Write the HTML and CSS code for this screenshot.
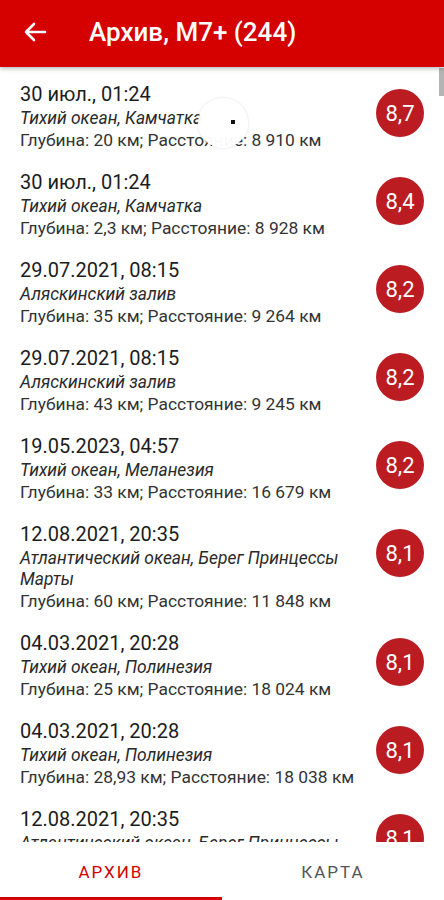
FILE: index.html
```html
<!DOCTYPE html>
<html lang="ru">
<head>
    <meta charset="UTF-8">
    <meta name="viewport" content="width=device-width, initial-scale=1.0">
    <title>Архив, M7+</title>
    <link rel="stylesheet" href="styles.css">
</head>
<body>

<div class="app">
    <header class="appbar">
        <svg class="back" width="24" height="20" viewBox="0 0 24 20">
            <path d="M22 10H3M11 2L3 10l8 8" fill="none" stroke="#fff" stroke-width="2.6" stroke-linecap="round" stroke-linejoin="round"/>
        </svg>
        <h1 class="title">Архив, M7+ (244)</h1>
    </header>

    <main class="list">
        <div class="scrollbar"></div>

        <div class="quake">
            <div class="info">
                <div class="date">30 июл., 01:24</div>
                <div class="place">Тихий океан, Камчатка</div>
                <div class="meta">Глубина: 20 км; Расстояние: 8 910 км</div>
            </div>
            <div class="mag">8,7</div>
        </div>

        <div class="quake">
            <div class="info">
                <div class="date">30 июл., 01:24</div>
                <div class="place">Тихий океан, Камчатка</div>
                <div class="meta">Глубина: 2,3 км; Расстояние: 8 928 км</div>
            </div>
            <div class="mag">8,4</div>
        </div>

        <div class="quake">
            <div class="info">
                <div class="date">29.07.2021, 08:15</div>
                <div class="place">Аляскинский залив</div>
                <div class="meta">Глубина: 35 км; Расстояние: 9 264 км</div>
            </div>
            <div class="mag">8,2</div>
        </div>

        <div class="quake">
            <div class="info">
                <div class="date">29.07.2021, 08:15</div>
                <div class="place">Аляскинский залив</div>
                <div class="meta">Глубина: 43 км; Расстояние: 9 245 км</div>
            </div>
            <div class="mag">8,2</div>
        </div>

        <div class="quake">
            <div class="info">
                <div class="date">19.05.2023, 04:57</div>
                <div class="place">Тихий океан, Меланезия</div>
                <div class="meta">Глубина: 33 км; Расстояние: 16 679 км</div>
            </div>
            <div class="mag">8,2</div>
        </div>

        <div class="quake">
            <div class="info">
                <div class="date">12.08.2021, 20:35</div>
                <div class="place">Атлантический океан, Берег Принцессы Марты</div>
                <div class="meta">Глубина: 60 км; Расстояние: 11 848 км</div>
            </div>
            <div class="mag">8,1</div>
        </div>

        <div class="quake">
            <div class="info">
                <div class="date">04.03.2021, 20:28</div>
                <div class="place">Тихий океан, Полинезия</div>
                <div class="meta">Глубина: 25 км; Расстояние: 18 024 км</div>
            </div>
            <div class="mag">8,1</div>
        </div>

        <div class="quake">
            <div class="info">
                <div class="date">04.03.2021, 20:28</div>
                <div class="place">Тихий океан, Полинезия</div>
                <div class="meta">Глубина: 28,93 км; Расстояние: 18 038 км</div>
            </div>
            <div class="mag">8,1</div>
        </div>

        <div class="quake">
            <div class="info">
                <div class="date">12.08.2021, 20:35</div>
                <div class="place">Атлантический океан, Берег Принцессы Марты</div>
                <div class="meta">Глубина: 60 км; Расстояние: 11 848 км</div>
            </div>
            <div class="mag">8,1</div>
        </div>

        <!-- touch indicator left on the screenshot -->
        <div class="touch"></div>
        <div class="touch-dot"></div>
    </main>

    <nav class="tabs">
        <div class="tab active">Архив</div>
        <div class="tab">Карта</div>
    </nav>
</div>

</body>
</html>
```

FILE: styles.css
```css
body {
    margin: 0;
    background-color: #fff;
    font-family: Roboto, 'Noto Sans', sans-serif;
    -webkit-font-smoothing: antialiased;
}
.app {
    display: flex;
    flex-direction: column;
    width: 444px;
    height: 900px;
    overflow: hidden;
}
.appbar {
    position: relative;
    z-index: 2;
    display: flex;
    align-items: center;
    height: 67px;
    flex-shrink: 0;
    padding: 0 0 0 23px;
    background-color: #d50000;
    box-shadow: 0 2px 4px rgba(0, 0, 0, 0.25);
}
.back {
    display: block;
    margin-top: -4px;
}
.title {
    margin: -4px 0 0 42px;
    font-size: 26px;
    font-weight: 500;
    color: #fff;
}
.list {
    position: relative;
    flex: 1;
    overflow: hidden;
    padding-top: 5px;
}
.scrollbar {
    position: absolute;
    top: 1px;
    right: 0;
    width: 5px;
    height: 28px;
    background-color: #b4b4b4;
}
.quake {
    display: flex;
    align-items: flex-start;
    padding: 8px 20px 9px 20px;
}
.info {
    flex: 1;
}
.date {
    font-size: 20px;
    line-height: 28px;
    color: #1c1c1c;
}
.place {
    font-size: 17.4px;
    line-height: 21px;
    font-style: italic;
    color: #2a2a2a;
}
.meta {
    font-size: 17.4px;
    line-height: 22px;
    color: #333;
}
.mag {
    display: flex;
    align-items: center;
    justify-content: center;
    width: 48px;
    height: 48px;
    margin: 9px 0 0 6px;
    border-radius: 50%;
    background-color: #bb1c22;
    color: #fff;
    font-size: 22px;
}
.touch {
    position: absolute;
    left: 198px;
    top: 31px;
    width: 50px;
    height: 50px;
    border-radius: 50%;
    background-color: rgba(255, 255, 255, 0.97);
    box-shadow: 0 0 3px rgba(0, 0, 0, 0.15);
}
.touch-dot {
    position: absolute;
    left: 231px;
    top: 53px;
    width: 4px;
    height: 4px;
    background-color: #111;
}
.tabs {
    display: flex;
    height: 58px;
    flex-shrink: 0;
    background-color: #fff;
}
.tab {
    flex: 1;
    display: flex;
    align-items: center;
    justify-content: center;
    padding: 5px 0 3px 0;
    font-size: 17px;
    letter-spacing: 2px;
    text-transform: uppercase;
    color: #555;
}
.tab.active {
    color: #d50000;
    border-bottom: 3px solid #d50000;
    padding-bottom: 0;
}
```
